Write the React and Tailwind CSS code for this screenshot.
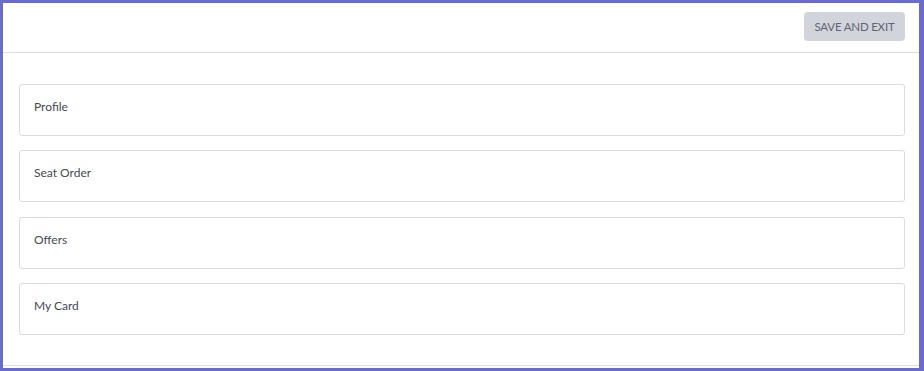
const sections = ["Profile", "Seat Order", "Offers", "My Card"];

export default function App() {
    return (
        <div className="w-[924px] h-[371px] bg-[#6b6bcb] pt-[3px] pl-[3px] pr-[5px] pb-[3px]" style={{ fontFamily: 'Lato, "Noto Sans", sans-serif' }}>
            <div className="h-full bg-white flex flex-col">
                {/* header */}
                <div className="h-[50px] border-b border-[#dcdcdf] flex items-center justify-end pr-[14px] shrink-0">
                    <button className="h-[29px] w-[101px] mt-[-2px] rounded bg-[#d1d4db] text-[11.5px] text-[#5f6673] uppercase tracking-[-0.2px]">
                        Save and Exit
                    </button>
                </div>
                <div className="flex-1 pt-[31px] pl-[16px] pr-[14px] flex flex-col gap-[14.4px]">
                    {sections.map((s) => (
                        <div key={s} className="h-[52px] border border-[#dadbe0] rounded-[3px] px-[14px] pt-[13px] text-[12px] text-[#454a53]">
                            {s}
                        </div>
                    ))}
                </div>
                <div className="h-[3px] border-t border-[#dcdcdf] shrink-0"></div>
            </div>
        </div>
    );
}
